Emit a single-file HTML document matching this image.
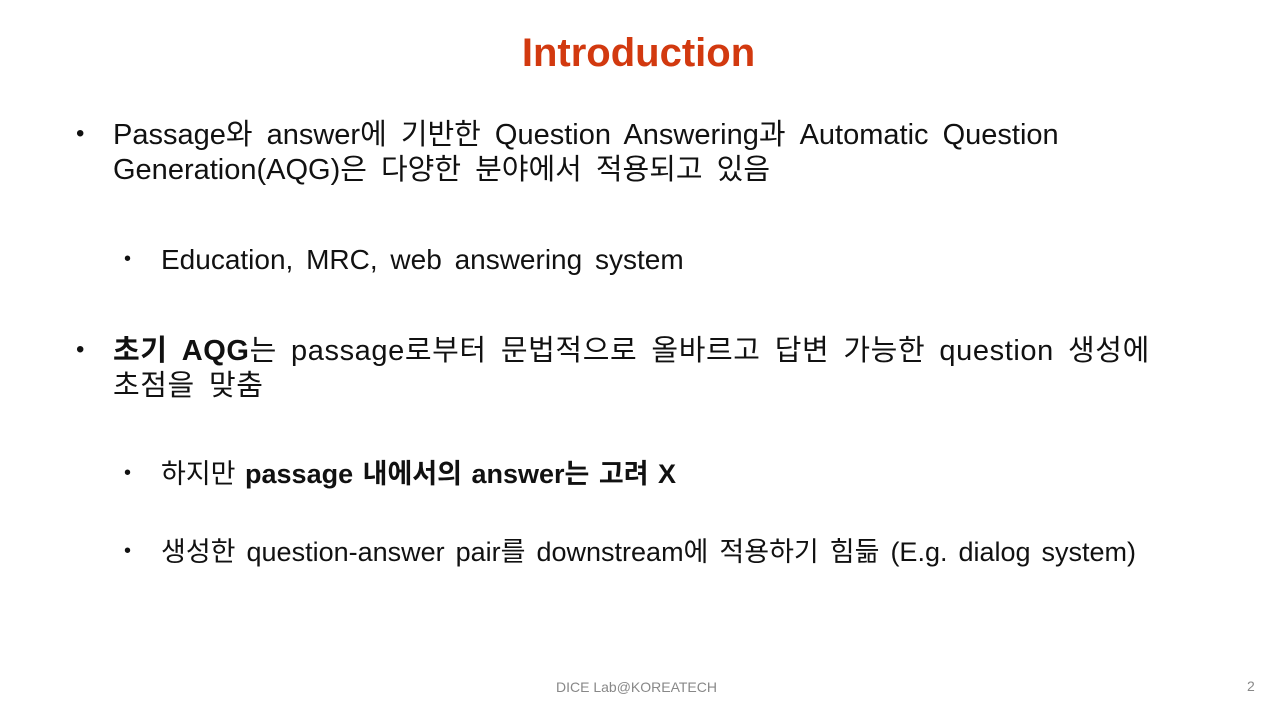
<!DOCTYPE html>
<html><head><meta charset="utf-8"><style>
body{margin:0;width:1280px;height:720px;background:#fff;position:relative;overflow:hidden;font-family:"Liberation Sans","Noto Sans CJK KR",sans-serif;color:#111}
.t{position:absolute;white-space:nowrap}
h1{position:absolute;top:31px;left:0;width:1277px;text-align:center;margin:0;font-size:40px;font-weight:bold;color:#d2390f;font-family:"Liberation Sans",sans-serif}
.b1{font-size:29px;line-height:35px;word-spacing:6px}
.b2{font-size:28px;line-height:32px;word-spacing:5px}
.dot{position:absolute;font-size:24px}
</style></head><body>
<h1>Introduction</h1>
<div class="dot" style="left:76px;top:120px">•</div>
<div class="t b1" style="left:113px;top:118px">Passage와 answer에 기반한 Question Answering과 Automatic Question<br>Generation(AQG)은 다양한 분야에서 적용되고 있음</div>
<div class="dot" style="left:124px;top:248px;font-size:20px">•</div>
<div class="t b2" style="left:161px;top:244px">Education, MRC, web answering system</div>
<div class="dot" style="left:76px;top:336px">•</div>
<div class="t b1" style="left:113px;top:334px;letter-spacing:0.6px;word-spacing:5.5px"><b>초기 AQG</b>는 passage로부터 문법적으로 올바르고 답변 가능한 question 생성에<br>초점을 맞춤</div>
<div class="dot" style="left:124px;top:462px;font-size:20px">•</div>
<div class="t b2" style="left:161px;top:458px;font-size:27px;word-spacing:2px">하지만 <b>passage 내에서의 answer는 고려 X</b></div>
<div class="dot" style="left:124px;top:540px;font-size:20px">•</div>
<div class="t b2" style="left:161px;top:536px;font-size:27px;word-spacing:3.5px">생성한 question-answer pair를 downstream에 적용하기 힘듦 (E.g. dialog system)</div>
<div class="t" style="left:556px;top:679px;font-size:14px;color:#888">DICE Lab@KOREATECH</div>
<div class="t" style="left:1247px;top:678px;font-size:14px;color:#888">2</div>
</body></html>
